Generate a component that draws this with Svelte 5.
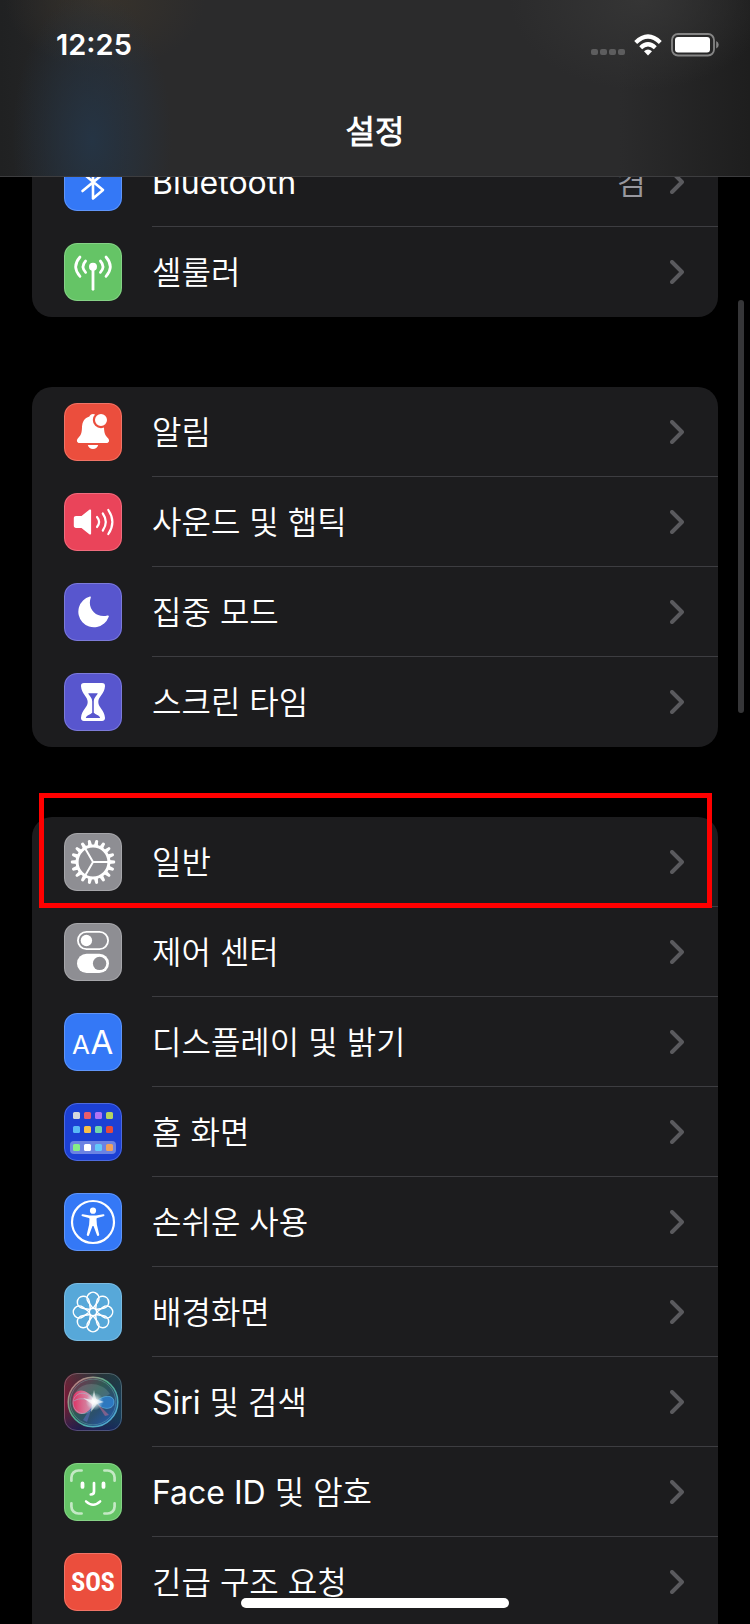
<script>
  const groups = [
    [
      { id: 'bluetooth', label: 'Bluetooth', value: '켬', color: '#3478f6' },
      { id: 'cellular', label: '셀룰러', color: '#65c466' },
    ],
    [
      { id: 'bell', label: '알림', color: '#eb4e3d' },
      { id: 'sound', label: '사운드 및 햅틱', color: '#ea445a' },
      { id: 'moon', label: '집중 모드', color: '#5856ce' },
      { id: 'hourglass', label: '스크린 타임', color: '#5856ce' },
    ],
    [
      { id: 'gear', label: '일반', color: '#8e8e93', marked: true },
      { id: 'toggles', label: '제어 센터', color: '#8e8e93' },
      { id: 'display', label: '디스플레이 및 밝기', color: '#3478f6' },
      { id: 'home', label: '홈 화면', color: '#1c40d4' },
      { id: 'access', label: '손쉬운 사용', color: '#3478f6' },
      { id: 'flower', label: '배경화면', color: '#57a8d9' },
      { id: 'siri', label: 'Siri 및 검색', color: '#241a30' },
      { id: 'face', label: 'Face ID 및 암호', color: '#65c466' },
      { id: 'sos', label: '긴급 구조 요청', color: '#eb4e3d' },
    ],
  ];

  const steps = (count) => Array.from({ length: count }, (_, i) => (i * 360) / count);
  const teeth = steps(18);
  const petals = steps(8);

  const appRows = [
    { y: 9, colors: ['#d5d7dc', '#e85d6c', '#b074f5', '#b4d35f'] },
    { y: 23, colors: ['#58b8f7', '#f7bf4a', '#6fd6ac', '#e74a3c'] },
    { y: 41, colors: ['#86ee85', '#ffffff', '#62c8fa', '#f0a15c'] },
  ];
</script>

{#snippet icon(id)}
  <svg viewBox="0 0 58 58" aria-hidden="true">
    {#if id === 'bluetooth'}
      <path class="line" stroke-width="2.6" d="M18.5 20 39 37 29 45.5v-33L39 21 18.5 38" />
    {:else if id === 'cellular'}
      <circle cx="29" cy="23.7" r="4" fill="#fff" />
      <path class="line" stroke-width="2.8" d="M29 24v22.3" />
      <path class="line" stroke-width="2.7" d="M16 14q-8.6 9.7 0 19.4M42 14q8.6 9.7 0 19.4M21.6 18q-5.2 5.7 0 11.4M36.4 18q5.2 5.7 0 11.4" />
    {:else if id === 'bell'}
      <path fill="#fff" d="M29 11c-1.8 0-3 .9-3.6 2.4C20.5 15 18.3 18.5 18 24c-.2 6.5-1 8-4 11.2-2 2.2-1 4.8 1.5 4.8h27c2.5 0 3.5-2.6 1.5-4.8-3-3.2-3.8-4.7-4-11.2-.3-5.5-2.5-9-7.4-10.6C32 11.9 30.8 11 29 11zM23.8 42h10.4c-.8 2.6-2.6 4-5.2 4s-4.4-1.4-5.2-4z" />
      <circle cx="37" cy="17" r="7.1" fill="#fff" stroke="#eb4e3d" stroke-width="2.2" />
    {:else if id === 'sound'}
      <path fill="#fff" d="M12 23h5.5l7.8-6.2c.9-.7 1.8-.3 1.8.8v22.8c0 1.1-.9 1.5-1.8.8L17.5 35H12c-1.3 0-2.2-.9-2.2-2.2v-7.6c0-1.3.9-2.2 2.2-2.2z" />
      <path class="line" stroke-width="2.2" d="M33 24q4.2 5 0 10M38.8 20.5q6 8.5 0 17M44.3 17q8.2 12 0 24" />
    {:else if id === 'moon'}
      <path fill="#fff" d="M25.9 13.6A15.6 15.6 0 1 0 44.6 34c.6-1.2 0-1.9-1.2-1.5C33 35.6 22.6 26 26.8 14.5c.3-.9-.2-1.3-.9-.9z" />
    {:else if id === 'hourglass'}
      <path fill="#fff" d="M20 10h18c2 0 3.2 1.2 3 3.2C40.4 21 34.3 23.5 34.3 29S40.4 37 41 44.8c.2 2-1 3.2-3 3.2H20c-2 0-3.2-1.2-3-3.2C17.6 37 23.7 34.5 23.7 29S17.6 21 17 13.2c-.2-2 1-3.2 3-3.2z" />
      <path fill="#5856ce" d="M24.3 20.2h9.4c-.6 2.6-3.9 3.8-3.9 8.3v11.3c1.6 1.8 5.8 2.2 6.4 5.2H21.8c.6-3 4.8-3.4 6.4-5.2V28.5c0-4.5-3.3-5.7-3.9-8.3z" />
    {:else if id === 'gear'}
      {#each teeth as angle}
        <path fill="#fff" transform="rotate({angle} 29 29)" d="M45 26.9l5.4.7c1.1.2 1.1 2.6 0 2.8l-5.4.7z" />
      {/each}
      <circle cx="29" cy="29" r="15.9" fill="none" stroke="#fff" stroke-width="3" />
      <path class="line" stroke-width="2" d="M29 29h15M29 29l-7.5-13M29 29l-7.5 13" />
    {:else if id === 'toggles'}
      <rect x="13.9" y="8.9" width="30.2" height="17.2" rx="8.6" fill="none" stroke="#fff" stroke-width="1.8" />
      <circle cx="22.4" cy="17.5" r="5.7" fill="#fff" />
      <rect x="13" y="30.8" width="32" height="19.2" rx="9.6" fill="#fff" />
      <circle cx="35.6" cy="40.4" r="6.7" fill="#8e8e93" />
    {:else if id === 'display'}
      <text class="glyph" x="17" y="41" font-size="26">A</text>
      <text class="glyph" x="38" y="41" font-size="33">A</text>
    {:else if id === 'home'}
      <rect x="6" y="38" width="46" height="13" rx="4" fill="#fff" opacity=".35" />
      {#each appRows as row}
        {#each row.colors as color, i}
          <rect x={9 + i * 11} y={row.y} width="7" height="7" rx="1.5" fill={color} />
        {/each}
      {/each}
    {:else if id === 'access'}
      <circle cx="29" cy="29" r="21" fill="none" stroke="#fff" stroke-width="2.2" />
      <circle cx="29" cy="17.7" r="3.1" fill="#fff" />
      <path fill="#fff" d="M18.8 21.3l7.2 1.1h6l7.2-1.1c1.5-.2 1.8 1.7.4 2L33.2 25c-.6.2-.8.5-.7 1.1l.4 5.6 2.3 9.9c.3 1.5-1.6 2-2.2.6L29.5 33h-1L25 42.2c-.6 1.4-2.5.9-2.2-.6l2.3-9.9.4-5.6c.1-.6-.1-.9-.7-1.1l-6.4-1.7c-1.4-.3-1.100-2.2.4-2z" />
    {:else if id === 'flower'}
      {#each petals as angle}
        <path class="line" stroke-width="1.5" transform="rotate({angle} 29 29)" d="M29 25.4l-4.9-6.6a6 6 0 1 1 9.8 0z" />
      {/each}
      <circle cx="29" cy="29" r="3.7" fill="none" stroke="#fff" stroke-width="1.5" />
    {:else if id === 'siri'}
      <defs>
        <linearGradient id="siri-back" x1="0" y1=".3" x2="1" y2=".7">
          <stop offset="0" stop-color="#8b1236" />
          <stop offset=".45" stop-color="#2c2038" />
          <stop offset="1" stop-color="#123f5c" />
        </linearGradient>
        <linearGradient id="siri-top" x1="0" y1="0" x2="0" y2="1">
          <stop offset="0" stop-color="#214b3c" stop-opacity=".5" />
          <stop offset=".55" stop-color="#214b3c" stop-opacity="0" />
          <stop offset="1" stop-color="#1c1660" stop-opacity=".6" />
        </linearGradient>
        <linearGradient id="siri-orb" x1=".1" y1=".2" x2=".8" y2=".9">
          <stop offset="0" stop-color="#6b3a50" />
          <stop offset=".4" stop-color="#2f5a55" />
          <stop offset=".7" stop-color="#2b4f70" />
          <stop offset="1" stop-color="#2458a0" />
        </linearGradient>
        <linearGradient id="siri-ring" x1="0" y1="0" x2="1" y2="1">
          <stop offset="0" stop-color="#e27682" />
          <stop offset=".45" stop-color="#4fb08b" />
          <stop offset="1" stop-color="#50a5e4" />
        </linearGradient>
        <linearGradient id="siri-pink" x1="0" y1="0" x2="1" y2="0">
          <stop offset="0" stop-color="#dd2f62" />
          <stop offset="1" stop-color="#f6b5cf" stop-opacity=".8" />
        </linearGradient>
        <radialGradient id="siri-glow">
          <stop offset="0" stop-color="#fff" />
          <stop offset=".3" stop-color="#fff" stop-opacity=".8" />
          <stop offset="1" stop-color="#bfe8f5" stop-opacity="0" />
        </radialGradient>
      </defs>
      <rect width="58" height="58" fill="url(#siri-back)" />
      <rect width="58" height="58" fill="url(#siri-top)" />
      <circle cx="29" cy="29" r="24.8" fill="url(#siri-orb)" stroke="url(#siri-ring)" stroke-width="1.5" />
      <circle cx="29" cy="29" r="22.8" fill="none" stroke="#7fd2c4" stroke-width=".8" opacity=".4" />
      <path fill="#9fc8c2" opacity=".22" d="M12 19C18 8 38 8 46 21L30 29z" />
      <path fill="url(#siri-pink)" d="M31 29C25 15 9 13 8.5 28s14 19 22.5 1z" />
      <path fill="none" stroke="#8fd5e2" stroke-width=".8" opacity=".6" d="M30 28C22 15 9 20 9 30s15 18 23-1M10 28c6-4 12-2 21 1" />
      <path fill="#2f86d8" opacity=".75" d="M32 29c6-7 18-8 18 0s-12 9-18 0z" />
      <path fill="none" stroke="#75d2f5" stroke-width=".8" opacity=".6" d="M32 29c6-7 18-8 18 0s-12 9-18 0" />
      <path fill="#e57195" opacity=".45" d="M32 29l13 13-4 1z" />
      <path fill="#6d7ce0" opacity=".4" d="M30 29L19 47l4 2z" />
      <circle cx="30.5" cy="28.5" r="9" fill="url(#siri-glow)" />
      <path fill="#fff" opacity=".6" d="M30 17l2 9 8 3-7 2-6 8 1-8-9-6 9 2z" />
    {:else if id === 'face'}
      <path class="line" stroke-width="2.7" opacity=".62" d="M7.4 17.7v-3.2a7 7 0 0 1 7-7h3.2M40.4 7.5h3.2a7 7 0 0 1 7 7v3.2M50.6 40.3v3.2a7 7 0 0 1-7 7h-3.2M17.6 50.5h-3.2a7 7 0 0 1-7-7v-3.2" />
      <path class="line" stroke-width="3.8" d="M18.5 20.5v3.4M39.5 20.5v3.4" />
      <path class="line" stroke-width="2.7" d="M30 20v8.5q0 3-3.2 3" />
      <path class="line" stroke-width="2.4" d="M22 38.3q7.2 6.8 14.2 0" />
    {:else if id === 'sos'}
      <text class="glyph sos" x="29" y="38" font-size="26">SOS</text>
    {/if}
    <rect x=".5" y=".5" width="57" height="57" rx="12.5" fill="none" stroke="#fff" stroke-opacity=".22" />
  </svg>
{/snippet}

<div class="screen">
  <header>
    <div class="status">
      <time>12:25</time>
      <div class="indicators">
        <span class="signal"><i></i><i></i><i></i><i></i></span>
        <svg class="wifi" viewBox="0 0 28 22" aria-hidden="true">
          <path fill="none" stroke="#fff" stroke-width="4.2" d="M1.7 8.4Q14-3.4 26.3 8.4" />
          <path fill="none" stroke="#fff" stroke-width="4.2" d="M6.7 13.7Q14 6.9 21.3 13.7" />
          <path fill="#fff" d="M14 21.4l-4-4.1q4-3.5 8 0z" />
        </svg>
        <svg class="battery" viewBox="0 0 48 24" aria-hidden="true">
          <rect x="1" y="1" width="42" height="21.5" rx="6" fill="none" stroke="#858585" stroke-width="1.8" />
          <rect x="4" y="4" width="35" height="15.5" rx="3" fill="#fff" />
          <path fill="#858585" d="M45.2 7.9q2.5 1 2.5 3.8t-2.5 3.8z" />
        </svg>
      </div>
    </div>
    <h1>설정</h1>
  </header>

  <main>
    {#each groups as group}
      <ul class="group">
        {#each group as item}
          <li>
            <button type="button">
              <span class="icon" style="background: {item.color}">{@render icon(item.id)}</span>
              <span class="body">
                <span class="label">{item.label}</span>
                {#if item.value}<span class="value">{item.value}</span>{/if}
                <svg class="chevron" viewBox="0 0 14 24" aria-hidden="true">
                  <path d="M2 2l10 10L2 22" />
                </svg>
              </span>
            </button>
            {#if item.marked}<span class="marker"></span>{/if}
          </li>
        {/each}
      </ul>
    {/each}
  </main>

  <div class="scrollbar"></div>
  <div class="home-bar"></div>
</div>

<style>
  :global(body) {
    margin: 0;
    background: #000;
  }

  .screen {
    position: relative;
    height: 100vh;
    overflow: hidden;
    background: #000;
    color: #fff;
    font-family: Inter, 'Noto Sans CJK KR DemiLight', 'Noto Sans CJK KR', sans-serif;
  }

  header {
    position: relative;
    z-index: 1;
    box-sizing: border-box;
    height: 177px;
    border-bottom: 1px solid #3d3d3f;
    background:
      radial-gradient(ellipse 80px 150px at 92px 140px, #253444 0%, #25344400 100%),
      radial-gradient(ellipse 100px 70px at 105px 0, #37322b 0%, #37322b00 100%),
      radial-gradient(ellipse 130px 90px at 640px 0, #353535 0%, #35353500 100%),
      linear-gradient(90deg, #202122 0, #2b2b2c 130px, #2b2b2c calc(100% - 130px), #1e1e1e 100%);
  }

  .status {
    display: flex;
    align-items: center;
    justify-content: space-between;
    padding: 27px 31px 0 56px;
    height: 36px;
  }

  time {
    font-size: 29px;
    font-weight: 600;
    line-height: 36px;
  }

  .indicators {
    display: flex;
    align-items: center;
    gap: 9px;
  }

  .signal {
    display: flex;
    gap: 2px;
    padding-top: 14px;
  }

  .signal i {
    width: 7px;
    height: 6px;
    border-radius: 2px;
    background: #5d5d5e;
  }

  .wifi {
    width: 28px;
    height: 22px;
  }

  .battery {
    width: 48px;
    height: 24px;
  }

  h1 {
    margin: 45px 0 0;
    font-size: 32px;
    font-weight: 600;
    line-height: 48px;
    text-align: center;
  }

  main {
    display: flex;
    flex-direction: column;
    gap: 70px;
    margin-top: -40px;
    padding: 0 32px;
  }

  .group {
    margin: 0;
    padding: 0;
    list-style: none;
    border-radius: 20px;
    background: #1c1c1e;
  }

  .group:last-child {
    padding-bottom: 90px;
  }

  li {
    position: relative;
  }

  button {
    display: flex;
    align-items: center;
    gap: 30px;
    width: 100%;
    height: 90px;
    margin: 0;
    padding: 0 0 0 32px;
    border: 0;
    background: none;
    color: inherit;
    font: inherit;
    font-size: 32px;
    line-height: 48px;
    text-align: left;
  }

  .icon {
    width: 58px;
    height: 58px;
    border-radius: 13px;
    overflow: hidden;
  }

  .icon svg {
    display: block;
    width: 100%;
    height: 100%;
  }

  .line {
    fill: none;
    stroke: #fff;
    stroke-linecap: round;
    stroke-linejoin: round;
  }

  .glyph {
    fill: #fff;
    text-anchor: middle;
  }

  .sos {
    font-family: 'Roboto Condensed', 'Liberation Sans Narrow', 'Open Sans', sans-serif;
    font-weight: 700;
  }

  .body {
    display: flex;
    flex: 1;
    align-items: center;
    box-sizing: border-box;
    height: 90px;
    padding-right: 34px;
    border-bottom: 1px solid #3d3d41;
  }

  li:last-child .body {
    border-bottom-color: transparent;
  }

  .label,
  .value {
    padding-top: 2px;
  }

  .label {
    flex: 1;
  }

  .value {
    margin-right: 24px;
    color: #98989f;
  }

  .chevron {
    width: 14px;
    height: 24px;
    fill: none;
    stroke: #5a5a5e;
    stroke-width: 4;
    stroke-linecap: round;
    stroke-linejoin: round;
  }

  .marker {
    position: absolute;
    inset: -24px 6px -1px 7px;
    z-index: 1;
    border: 5px solid #f00;
    pointer-events: none;
  }

  .scrollbar {
    position: absolute;
    top: 300px;
    right: 6px;
    width: 6px;
    height: 413px;
    border-radius: 3px;
    background: #363638;
  }

  .home-bar {
    position: absolute;
    bottom: 16px;
    left: 50%;
    width: 268px;
    height: 10px;
    border-radius: 5px;
    background: #fff;
    transform: translateX(-50%);
  }
</style>
